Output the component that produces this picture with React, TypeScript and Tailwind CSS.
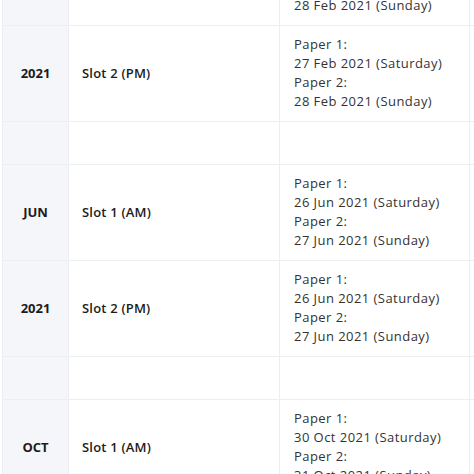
import React from 'react';

type Row = { label?: string; slot?: string; dates?: [string, string] } | null;

const rows: Row[] = [
  { label: 'FEB', slot: 'Slot 1 (AM)', dates: ['27 Feb 2021 (Saturday)', '28 Feb 2021 (Sunday)'] },
  { label: '2021', slot: 'Slot 2 (PM)', dates: ['27 Feb 2021 (Saturday)', '28 Feb 2021 (Sunday)'] },
  null,
  { label: 'JUN', slot: 'Slot 1 (AM)', dates: ['26 Jun 2021 (Saturday)', '27 Jun 2021 (Sunday)'] },
  { label: '2021', slot: 'Slot 2 (PM)', dates: ['26 Jun 2021 (Saturday)', '27 Jun 2021 (Sunday)'] },
  null,
  { label: 'OCT', slot: 'Slot 1 (AM)', dates: ['30 Oct 2021 (Saturday)', '31 Oct 2021 (Sunday)'] },
];

export default function App() {
  return (
    <div className="h-[474px] w-[474px] overflow-hidden bg-white" style={{ fontFamily: '"Open Sans", sans-serif' }}>
      <table className="-mt-[71px] ml-[2px] w-[520px] table-fixed border-collapse text-[13px] leading-[19px]">
        <colgroup>
          <col className="w-[66px]" />
          <col className="w-[211px]" />
          <col className="w-[190px]" />
          <col />
        </colgroup>
        <tbody>
          {rows.map((r, i) =>
            r ? (
              <tr key={i} className="border-t border-[#eceef2]">
                <td className="border-x border-[#eceef2] bg-[#f5f6fa] text-center font-bold text-[#1c1c1c]">
                  {r.label}
                </td>
                <td className="px-[13px] font-semibold tracking-[0.2px] text-[#1c1c1c]">{r.slot}</td>
                <td className="border-x border-[#eceef2] px-[14px] pt-[9px] pb-[10px] tracking-[0.45px] text-[#333]">
                  <div>Paper 1:</div>
                  <div>{r.dates?.[0]}</div>
                  <div>Paper 2:</div>
                  <div>{r.dates?.[1]}</div>
                </td>
                <td />
              </tr>
            ) : (
              <tr key={i} className="h-[43px] border-t border-[#eceef2]">
                <td className="border-x border-[#eceef2] bg-[#f5f6fa]" />
                <td />
                <td className="border-x border-[#eceef2]" />
                <td />
              </tr>
            ),
          )}
        </tbody>
      </table>
    </div>
  );
}
